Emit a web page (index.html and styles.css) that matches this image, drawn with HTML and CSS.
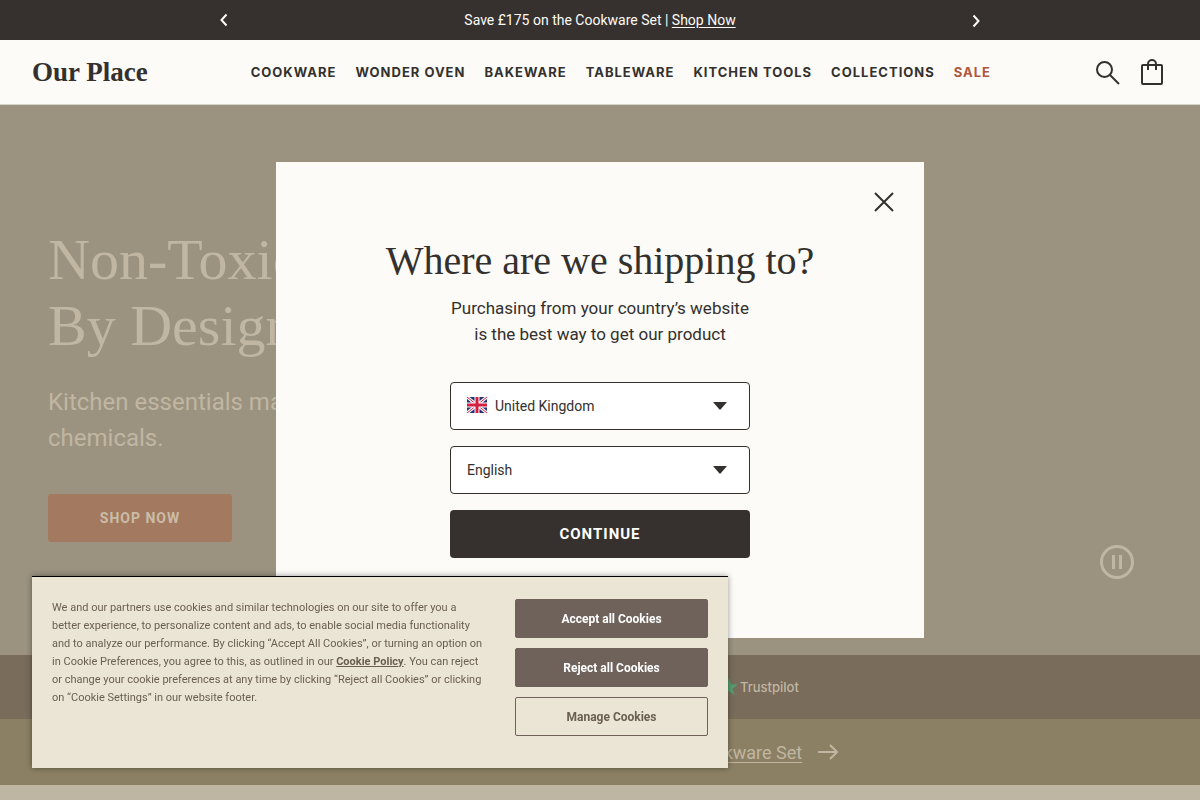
FILE: index.html
```html
<!DOCTYPE html>
<html lang="en-GB">
<head>
    <meta charset="UTF-8">
    <meta name="viewport" content="width=device-width, initial-scale=1.0">
    <title>Our Place</title>
    <link rel="stylesheet" href="styles.css">
</head>
<body>
    <div class="announcement">
        <button class="icon-button" aria-label="Previous">
            <svg width="16" height="16" viewBox="0 0 16 16"><path d="M10.5 2.500 5.500 8l5 5.500"/></svg>
        </button>
        <p class="announcement-text">Save £175 on the Cookware Set | <a href="#">Shop Now</a></p>
        <button class="icon-button" aria-label="Next">
            <svg width="16" height="16" viewBox="0 0 16 16"><path d="M5.500 3.500 10.500 9l-5 5.500"/></svg>
        </button>
    </div>

    <header class="header">
        <a href="#" class="logo">Our Place</a>
        <nav class="nav">
            <a href="#">Cookware</a>
            <a href="#">Wonder Oven</a>
            <a href="#">Bakeware</a>
            <a href="#">Tableware</a>
            <a href="#">Kitchen Tools</a>
            <a href="#">Collections</a>
            <a href="#" class="sale">Sale</a>
        </nav>
        <div class="header-icons">
            <button class="icon-button" aria-label="Search">
                <svg width="28" height="28" viewBox="0 0 28 28"><circle cx="10.500" cy="11.500" r="7.500"/><path d="m16 17 9 9"/></svg>
            </button>
            <button class="icon-button" aria-label="Cart">
                <svg width="28" height="28" viewBox="0 0 28 28"><rect x="4" y="7" width="20" height="19" rx="1"/><path d="M10 12V6a4 4 0 0 1 8 0v6"/></svg>
            </button>
        </div>
    </header>

    <main>
        <section class="hero">
            <h1 class="hero-title">Non-Toxic<br>By Design</h1>
            <p class="hero-text">Kitchen essentials made without toxic<br>chemicals.</p>
            <a href="#" class="hero-button">Shop Now</a>
            <button class="icon-button pause-button" aria-label="Pause">
                <svg width="34" height="34" viewBox="0 0 34 34"><circle cx="17" cy="17" r="15.500"/><path d="M13.500 10v14M20.500 10v14"/></svg>
            </button>
        </section>

        <section class="trust-bar">
            <svg width="18" height="18" viewBox="0 0 18 18"><path d="m9 0 2.200 6.500H18l-5.500 4.100 2.100 6.600L9 13.200l-5.600 4 2.100-6.600L0 6.500h6.800z"/></svg>
            <span>Trustpilot</span>
        </section>

        <section class="promo-bar">
            <a href="#">Save £175 when you shop the best-loved Cookware Set</a>
            <svg width="20" height="16" viewBox="0 0 20 16"><path d="M0 8h19M12 1l7 7-7 7"/></svg>
        </section>
    </main>

    <!-- Shipping popup -->
    <div class="modal-wrap">
        <form class="modal" role="dialog" aria-labelledby="modal-title">
            <button type="button" class="icon-button modal-close" aria-label="Close">
                <svg width="20" height="20" viewBox="0 0 20 20"><path d="m1 1 18 18M19 1 1 19"/></svg>
            </button>
            <h2 class="modal-title" id="modal-title">Where are we shipping to?</h2>
            <p class="modal-text">Purchasing from your country’s website<br>is the best way to get our product</p>
            <div class="fields">
                <div class="select-box has-flag">
                    <svg class="flag" width="20" height="16" viewBox="0 0 20 16">
                        <path fill="#283375" d="M0 0h20v16H0z"/>
                        <path stroke="#fff" stroke-width="3" d="m0 0 20 16M20 0 0 16"/>
                        <path stroke="#d32042" stroke-width="1" d="m0 0 20 16M20 0 0 16"/>
                        <path stroke="#fff" stroke-width="5" d="M10 0v16M0 8h20"/>
                        <path stroke="#d32042" stroke-width="3" d="M10 0v16M0 8h20"/>
                    </svg>
                    <select aria-label="Country">
                        <option>United Kingdom</option>
                    </select>
                    <svg class="caret" width="14" height="8" viewBox="0 0 14 8"><path d="M0 0h14L8 7q-1 1-2 0z"/></svg>
                </div>
                <div class="select-box">
                    <select aria-label="Language">
                        <option>English</option>
                    </select>
                    <svg class="caret" width="14" height="8" viewBox="0 0 14 8"><path d="M0 0h14L8 7q-1 1-2 0z"/></svg>
                </div>
                <button type="button" class="continue-button">Continue</button>
            </div>
        </form>
    </div>

    <!-- Cookie banner -->
    <div class="cookie-banner" role="region" aria-label="Cookies">
        <p class="cookie-text">We and our partners use cookies and similar technologies on our site to offer you a better experience, to personalize content and ads, to enable social media functionality and to analyze our performance. By clicking “Accept All Cookies”, or turning an option on in Cookie Preferences, you agree to this, as outlined in our <a href="#">Cookie Policy</a>. You can reject or change your cookie preferences at any time by clicking “Reject all Cookies” or clicking on “Cookie Settings” in our website footer.</p>
        <div class="cookie-buttons">
            <button>Accept all Cookies</button>
            <button>Reject all Cookies</button>
            <button class="manage">Manage Cookies</button>
        </div>
    </div>
</body>
</html>
```
FILE: styles.css
```css
* {
    box-sizing: border-box;
}

body {
    margin: 0;
    min-height: 100vh;
    overflow: hidden; /* no page scroll while the popup is open */
    background-color: #beb5a2;
    color: #33302d;
    font-family: Roboto, "Liberation Sans", sans-serif;
    font-size: 14px;
}

h1, h2, p {
    margin: 0;
    font-weight: normal;
}

a {
    color: inherit;
}

svg {
    display: block;
    fill: none;
    stroke: currentColor;
    stroke-width: 2;
}

button {
    font-family: inherit;
    cursor: pointer;
}

.icon-button {
    padding: 0;
    border: none;
    background: none;
    color: inherit;
}

/* Top bar */
.announcement {
    display: flex;
    align-items: center;
    justify-content: space-between;
    height: 40px;
    padding: 0 18%;
    background-color: #36312e;
    color: #fcfbf8;
}

.announcement a {
    text-underline-offset: 2px;
}

.header {
    display: flex;
    align-items: center;
    justify-content: space-between;
    height: 65px;
    padding: 0 34px 0 32px;
    background-color: #fcfbf8;
    border-bottom: 1px solid #d8d4ca;
}

.logo {
    font-family: "Liberation Serif", serif;
    font-size: 27px;
    font-weight: bold;
    text-decoration: none;
}

.nav {
    display: flex;
    gap: 19px;
}

.nav a {
    font-family: Inter, sans-serif;
    font-size: 13px;
    font-weight: 700;
    letter-spacing: 1px;
    text-decoration: none;
    text-transform: uppercase;
    white-space: nowrap;
}

.nav .sale {
    color: #ad5640;
}

.header-icons {
    display: flex;
    gap: 16px;
}

/* Hero */
.hero {
    position: relative;
    padding: 122px 48px 113px;
    background-color: #9b9380;
    color: #c0b6a2;
}

.hero-title {
    font-family: "Liberation Serif", serif;
    font-size: 58px;
    line-height: 66px;
    margin-bottom: 25px;
}

.hero-text {
    font-size: 24px;
    line-height: 36px;
    margin-bottom: 38px;
}

.hero-button {
    display: block;
    width: 184px;
    border-radius: 3px;
    background-color: #a37a5f;
    color: #cbbca7;
    font-size: 14px;
    font-weight: bold;
    line-height: 48px;
    letter-spacing: 1px;
    text-align: center;
    text-decoration: none;
    text-transform: uppercase;
}

.pause-button {
    position: absolute;
    right: 66px;
    bottom: 76px;
}

.pause-button svg {
    stroke-width: 3;
}

.trust-bar,
.promo-bar {
    display: flex;
    align-items: center;
    color: #c0b6a2;
}

.trust-bar {
    gap: 2px;
    height: 64px;
    padding-left: 60%;
    background-color: #796c5b;
    font-family: Inter, sans-serif;
    font-size: 13px;
    font-weight: 500;
}

.trust-bar svg {
    fill: #579d70;
    stroke: none;
}

.promo-bar {
    justify-content: center;
    gap: 16px;
    height: 66px;
    background-color: #8b8063;
    font-size: 18px;
}

.promo-bar a {
    text-underline-offset: 3px;
}

/* Shipping popup */
.modal-wrap {
    position: fixed;
    inset: 0;
    display: flex;
    align-items: center;
    justify-content: center;
}

.modal {
    position: relative;
    width: 100%;
    max-width: 648px;
    padding: 80px 24px;
    background-color: #fcfbf8;
    text-align: center;
}

.modal-close {
    position: absolute;
    top: 30px;
    right: 30px;
}

.modal-title {
    font-family: "Liberation Serif", serif;
    font-size: 40px;
    line-height: 38px;
    margin-bottom: 15px;
}

.modal-text {
    font-size: 17px;
    line-height: 26px;
    margin-bottom: 35px;
}

.fields {
    display: flex;
    flex-direction: column;
    gap: 16px;
    max-width: 300px;
    margin: 0 auto;
}

.select-box {
    position: relative;
}

.select-box select {
    display: block;
    width: 100%;
    height: 48px;
    padding: 0 40px 0 16px;
    border: 1px solid #33302d;
    border-radius: 4px;
    background-color: #fff;
    color: inherit;
    font-family: inherit;
    font-size: 14px;
    appearance: none;
}

.has-flag select {
    padding-left: 44px;
}

.flag {
    position: absolute;
    top: 15px;
    left: 17px;
    stroke: none;
}

.caret {
    position: absolute;
    top: 20px;
    right: 23px;
    fill: currentColor;
    stroke: none;
}

.continue-button {
    height: 48px;
    border: none;
    border-radius: 4px;
    background-color: #36312e;
    color: #fff;
    font-size: 15px;
    font-weight: bold;
    letter-spacing: 1px;
    text-transform: uppercase;
}

/* Cookie banner */
.cookie-banner {
    position: fixed;
    left: 32px;
    bottom: 32px;
    display: flex;
    justify-content: space-between;
    gap: 20px;
    width: 58%;
    padding: 22px 20px 32px;
    border-top: 1px solid #000;
    background-color: #ebe5d5;
    color: #695f50;
    box-shadow: 0 0 6px rgba(0, 0, 0, 0.4);
}

.cookie-text {
    max-width: 435px;
    font-size: 11px;
    line-height: 18px;
}

.cookie-text a {
    font-weight: bold;
}

.cookie-buttons {
    display: flex;
    flex-direction: column;
    flex-shrink: 0;
    gap: 10px;
    width: 193px;
}

.cookie-buttons button {
    height: 39px;
    border: 1px solid #6e625a;
    border-radius: 2px;
    background-color: #6e625a;
    color: #fff;
    font-size: 12px;
    font-weight: bold;
}

.cookie-buttons .manage {
    background: none;
    color: #695f50;
}
```
